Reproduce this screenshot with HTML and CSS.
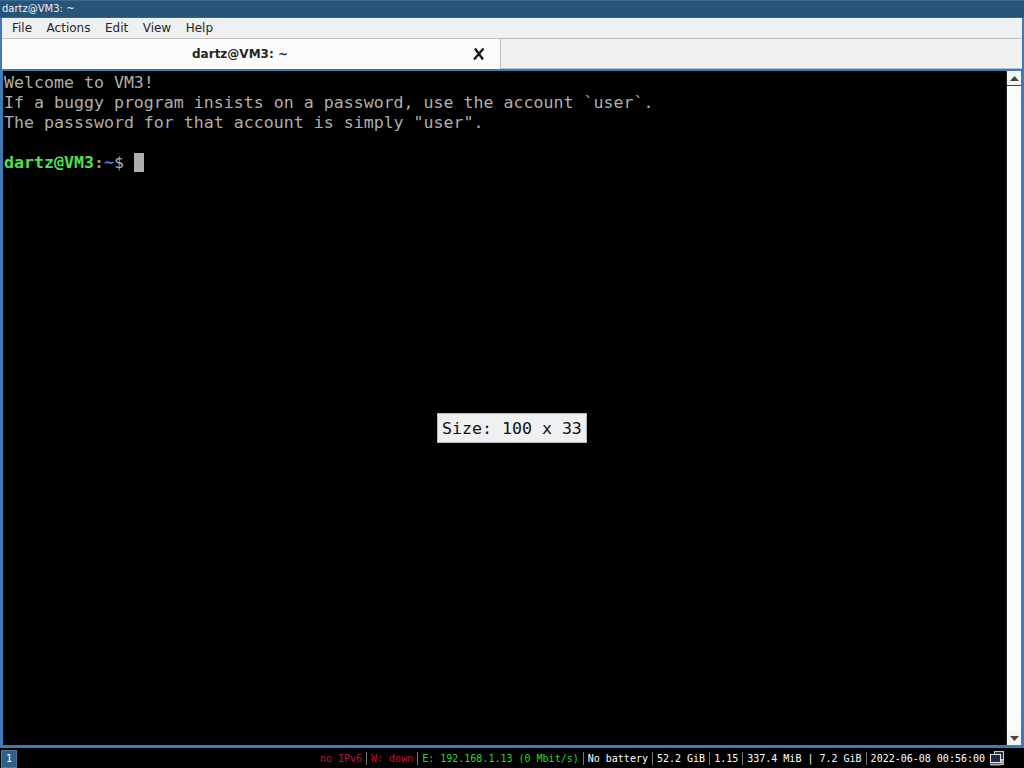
FILE: index.html
```html
<!DOCTYPE html>
<html lang="en">
<head>
<meta charset="utf-8">
<title>dartz@VM3: ~</title>
<link rel="stylesheet" href="styles.css">
</head>
<body>
<div class="window">
  <div class="titlebar">dartz@VM3: ~</div>
  <div class="app">
    <div class="menubar">
      <span class="menu">File</span><span class="menu">Actions</span><span class="menu">Edit</span><span class="menu">View</span><span class="menu">Help</span>
    </div>
    <div class="tabbar">
      <div class="tab">
        <span class="tab-label">dartz@VM3: ~</span>
        <svg class="tab-close" width="14" height="14" viewBox="0 0 14 14"><path d="M3 1.5 L11 12.5 M11.5 1.5 L2 12.5" stroke="#1c1c1c" stroke-width="2.4" fill="none"/></svg>
      </div>
      <div class="tab-rest"></div>
    </div>
    <div class="termwrap">
      <div class="terminal">
        <div class="line">Welcome to VM3!</div>
        <div class="line">If a buggy program insists on a password, use the account `user`.</div>
        <div class="line">The passsword for that account is simply "user".</div>
        <div class="line">&nbsp;</div>
        <div class="line"><span class="g">dartz@VM3</span><span class="colon">:</span><span class="b">~</span>$ <span class="cursor"></span></div>
      </div>
      <div class="scrollbar">
        <div class="sbtn"><svg width="9" height="5" viewBox="0 0 9 5"><path d="M4.5 0 L9 5 L0 5 Z" fill="#444"/></svg></div>
        <div class="strack"></div>
        <div class="sbtn"><svg width="9" height="5" viewBox="0 0 9 5"><path d="M0 0 L9 0 L4.5 5 Z" fill="#444"/></svg></div>
      </div>
      <div class="sizetip">Size: 100 x 33</div>
    </div>
  </div>
</div>
<div class="statusbar">
  <div class="ws">1</div>
  <div class="status">
    <span class="red">no IPv6</span><span class="sep"></span><span class="red">W: down</span><span class="sep"></span><span class="green">E: 192.168.1.13 (0 Mbit/s)</span><span class="sep"></span><span>No battery</span><span class="sep"></span><span>52.2 GiB</span><span class="sep"></span><span>1.15</span><span class="sep"></span><span>337.4 MiB | 7.2 GiB</span><span class="sep"></span><span>2022-06-08 00:56:00</span>
    <svg class="tray" width="16" height="16" viewBox="0 0 16 16"><rect x="5.5" y="1.5" width="9" height="8" fill="#283848" stroke="#c8ccd0"/><rect x="1.5" y="4.5" width="10" height="8" fill="#1c2c44" stroke="#e4e6e8"/><path d="M1 14.5 H12" stroke="#a8acb0" stroke-width="2"/><rect x="12" y="10" width="3" height="5" fill="#aab0b4"/></svg>
  </div>
</div>
</body>
</html>
```
FILE: styles.css
```css
html, body { margin: 0; padding: 0; background: #000; }
body { width: 1024px; height: 768px; overflow: hidden; display: flex; flex-direction: column; font-family: "DejaVu Sans", sans-serif; }
.window { height: 748px; display: flex; flex-direction: column; background: #3f7ab4; box-sizing: border-box; border-bottom: 3px solid #3f7ab4; }
.titlebar { height: 18px; flex: none; background: #285577; border-top: 1px solid #3a6a92; box-sizing: border-box; color: #e8eef4; font: 10px/15px "DejaVu Sans", sans-serif; padding-left: 2px; border-bottom: 1px solid #2f6792; }
.app { flex: 1; min-height: 0; display: flex; flex-direction: column; margin: 0 2px; background: #eff0f1; }
.menubar { height: 21px; flex: none; box-sizing: border-box; display: flex; padding: 0 0 0 2.75px; background: #eff0f1; color: #232627; font-size: 12px; line-height: 20px; border-bottom: 1px solid #bcbebf; }
.menu { padding: 0 7.25px; }
.tabbar { height: 30px; flex: none; display: flex; background: #eff0f1; }
.tab { width: 499px; box-sizing: border-box; background: #fcfcfc; border-right: 1px solid #b8babb; display: flex; align-items: center; position: relative; justify-content: center; font-size: 12px; font-weight: bold; color: #232627; padding-right: 22px; }
.tab-close { position: absolute; left: 470px; top: 8px; }
.tab-rest { flex: 1; border-bottom: 1px solid #b8babb; box-shadow: inset 0 -1px 0 #f8f8f8; }
.termwrap { flex: 1; min-height: 0; display: flex; position: relative; border-top: 2px solid #3f7ab4; border-left: 1px solid #3f7ab4; border-right: 1px solid #3f7ab4; background: #000; }
.terminal { flex: 1; min-width: 0; background: #000; color: #aeaeae; font: 16.6px/20px "DejaVu Sans Mono", monospace; padding: 2px 0 0 1px; }
.line { height: 20px; white-space: pre; }
.g { color: #50e050; font-weight: bold; }
.colon { color: #8a9a8a; font-weight: bold; }
.b { color: #4a78e0; font-weight: bold; }
.cursor { display: inline-block; width: 10px; height: 19px; background: #aeaeae; vertical-align: -4px; }
.scrollbar { width: 14px; flex: none; display: flex; flex-direction: column; background: #fcfcfc; border-left: 1px solid #222; }
.sbtn { height: 14px; flex: none; display: flex; align-items: center; justify-content: center; background: #f4f4f4; }
.sbtn:first-child { border-bottom: 1px solid #444; }
.strack { flex: 1; background: #fcfcfc; }
.sizetip { position: absolute; left: 434px; top: 342px; width: 150px; height: 30px; box-sizing: border-box; background: #eff0f1; border: 1px solid #bbb; color: #111; font: 16.6px/29px "DejaVu Sans Mono", monospace; padding-left: 4px; white-space: pre; }
.statusbar { height: 20px; flex: none; display: flex; justify-content: space-between; background: #000; align-items: center; }
.ws { width: 14px; height: 16px; margin: 1px 0 0 1px; background: #2f5f86; border: 1px solid #4c7899; color: #fff; font: 10px/16px "DejaVu Sans Mono", monospace; text-align: center; }
.status { display: flex; align-items: center; color: #fff; font: 10px/20px "DejaVu Sans Mono", monospace; white-space: pre; padding: 1px 19px 0 0; }
.red { color: #c8102e; }
.green { color: #22dd22; }
.sep { width: 1px; height: 13px; background: #777; margin: 0 4px; }
.tray { margin: -1px 0 0 4px; }
```
